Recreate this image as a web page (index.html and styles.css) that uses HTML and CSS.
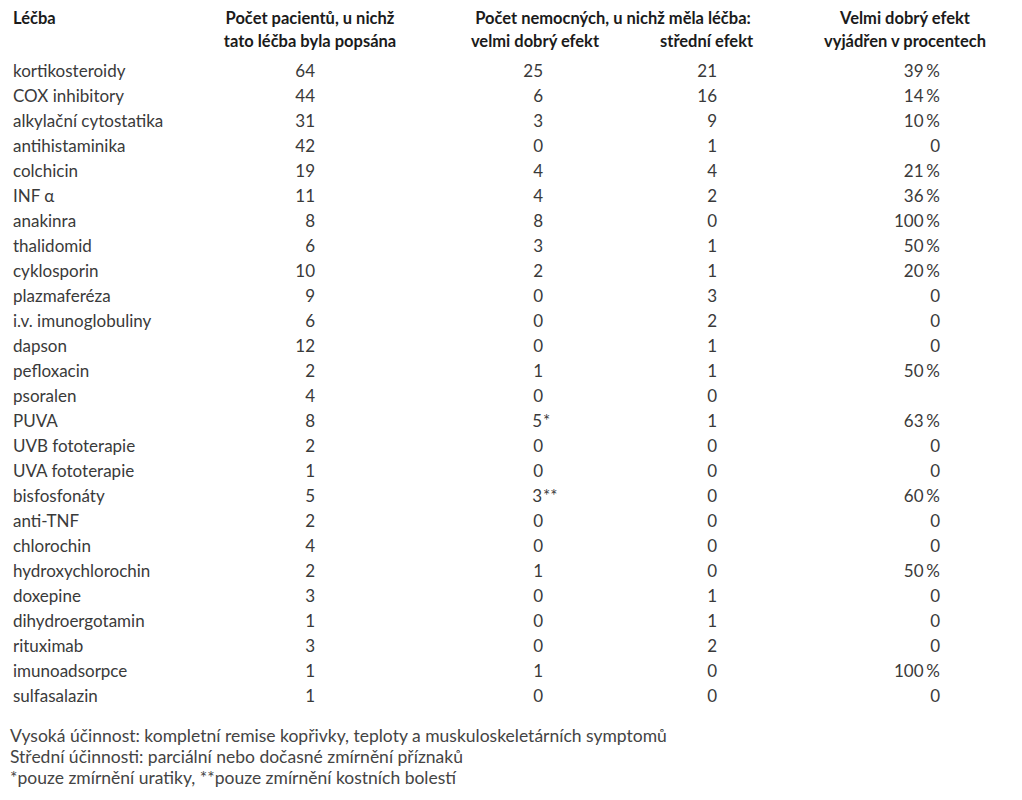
FILE: index.html
```html
<!DOCTYPE html>
<html lang="cs">
<head>
  <meta charset="UTF-8">
  <meta name="viewport" content="width=device-width, initial-scale=1.0">
  <title>Léčba</title>
  <link rel="stylesheet" href="styles.css">
</head>
<body>
  <div class="page">
    <table class="therapy">
      <colgroup>
        <col class="c-name">
        <col class="c-count">
        <col class="c-good">
        <col class="c-mid">
        <col class="c-pct">
      </colgroup>
      <thead>
        <tr>
          <th class="h-name" rowspan="2">Léčba</th>
          <th class="h-count" rowspan="2">Počet pacientů, u nichž<br>tato léčba byla popsána</th>
          <th class="h-group" colspan="2">Počet nemocných, u nichž měla léčba:</th>
          <th class="h-pct" rowspan="2">Velmi dobrý efekt<br>vyjádřen v procentech</th>
        </tr>
        <tr>
          <th class="h-good">velmi dobrý efekt</th>
          <th class="h-mid">střední efekt</th>
        </tr>
      </thead>
      <tbody>
        <tr><td>kortikosteroidy</td><td>64</td><td>25</td><td>21</td><td>39&#8198;%</td></tr>
        <tr><td>COX inhibitory</td><td>44</td><td>6</td><td>16</td><td>14&#8198;%</td></tr>
        <tr><td>alkylační cytostatika</td><td>31</td><td>3</td><td>9</td><td>10&#8198;%</td></tr>
        <tr><td>antihistaminika</td><td>42</td><td>0</td><td>1</td><td>0</td></tr>
        <tr><td>colchicin</td><td>19</td><td>4</td><td>4</td><td>21&#8198;%</td></tr>
        <tr><td>INF α</td><td>11</td><td>4</td><td>2</td><td>36&#8198;%</td></tr>
        <tr><td>anakinra</td><td>8</td><td>8</td><td>0</td><td>100&#8198;%</td></tr>
        <tr><td>thalidomid</td><td>6</td><td>3</td><td>1</td><td>50&#8198;%</td></tr>
        <tr><td>cyklosporin</td><td>10</td><td>2</td><td>1</td><td>20&#8198;%</td></tr>
        <tr><td>plazmaferéza</td><td>9</td><td>0</td><td>3</td><td>0</td></tr>
        <tr><td>i.v. imunoglobuliny</td><td>6</td><td>0</td><td>2</td><td>0</td></tr>
        <tr><td>dapson</td><td>12</td><td>0</td><td>1</td><td>0</td></tr>
        <tr><td>pefloxacin</td><td>2</td><td>1</td><td>1</td><td>50&#8198;%</td></tr>
        <tr><td>psoralen</td><td>4</td><td>0</td><td>0</td><td></td></tr>
        <tr><td>PUVA</td><td>8</td><td>5<span class="note">*</span></td><td>1</td><td>63&#8198;%</td></tr>
        <tr><td>UVB fototerapie</td><td>2</td><td>0</td><td>0</td><td>0</td></tr>
        <tr><td>UVA fototerapie</td><td>1</td><td>0</td><td>0</td><td>0</td></tr>
        <tr><td>bisfosfonáty</td><td>5</td><td>3<span class="note">**</span></td><td>0</td><td>60&#8198;%</td></tr>
        <tr><td>anti-TNF</td><td>2</td><td>0</td><td>0</td><td>0</td></tr>
        <tr><td>chlorochin</td><td>4</td><td>0</td><td>0</td><td>0</td></tr>
        <tr><td>hydroxychlorochin</td><td>2</td><td>1</td><td>0</td><td>50&#8198;%</td></tr>
        <tr><td>doxepine</td><td>3</td><td>0</td><td>1</td><td>0</td></tr>
        <tr><td>dihydroergotamin</td><td>1</td><td>0</td><td>1</td><td>0</td></tr>
        <tr><td>rituximab</td><td>3</td><td>0</td><td>2</td><td>0</td></tr>
        <tr><td>imunoadsorpce</td><td>1</td><td>1</td><td>0</td><td>100&#8198;%</td></tr>
        <tr><td>sulfasalazin</td><td>1</td><td>0</td><td>0</td><td>0</td></tr>
      </tbody>
    </table>

    <div class="notes">
      <p>Vysoká účinnost: kompletní remise kopřivky, teploty a muskuloskeletárních symptomů</p>
      <p>Střední účinnosti: parciální nebo dočasné zmírnění příznaků</p>
      <p>*pouze zmírnění uratiky, **pouze zmírnění kostních bolestí</p>
    </div>
  </div>
</body>
</html>
```

FILE: styles.css
```css
body{
  margin: 0;
  background: #fff;
  font-family: Lato, "Open Sans", sans-serif;
  color: #3a3a3a;
}

.page{
  padding: 7px 10px 0;
}

.therapy{
  width: 1002px;
  table-layout: fixed;
  border-collapse: collapse;
  font-size: 17px;
}
.therapy .c-name{ width: 200px; }
.therapy .c-count{ width: 200px; }
.therapy .c-good{ width: 250px; }
.therapy .c-mid{ width: 100px; }
.therapy .c-pct{ width: 252px; }

.therapy th{
  padding: 0;
  font-size: 16.5px;
  font-weight: 700;
  color: #1b1b1b;
  line-height: 23px;
  text-align: center;
  vertical-align: top;
  white-space: nowrap;
}
.therapy .h-name{
  text-align: left;
  padding-left: 3px;
}
.therapy .h-group{ padding-left: 56px; }
.therapy .h-mid{ padding-right: 8px; }
.therapy .h-pct{ padding-left: 38px; }

.therapy tbody tr:first-child td{
  padding-top: 5px;
}

.therapy td{
  padding: 0;
  height: 25px;
  line-height: 25px;
  text-align: right;
  white-space: nowrap;
}
.therapy td:nth-child(1){
  text-align: left;
  padding-left: 3px;
}
.therapy td:nth-child(2){ padding-right: 95px; }
.therapy td:nth-child(3){ padding-right: 117px; }
.therapy td:nth-child(4){ padding-right: 43px; }
.therapy td:nth-child(5){ padding-right: 72px; }

.therapy .note{
  display: inline-block;
  width: 0;
  overflow: visible;
  padding-left: 1px;
}

.notes{
  margin-top: 17px;
  font-size: 17.5px;
  color: #444;
}
.notes p{
  margin: 0;
  line-height: 21px;
}
```
